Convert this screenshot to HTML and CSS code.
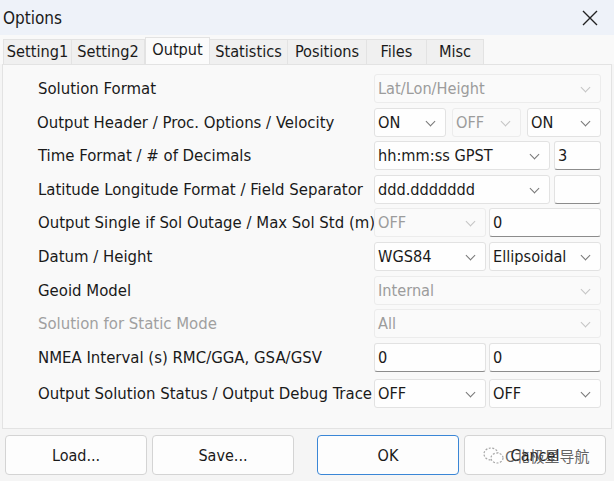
FILE: index.html
```html
<!DOCTYPE html>
<html lang="en">
<head>
    <meta charset="UTF-8">
    <title>Options</title>
    <link rel="stylesheet" href="styles.css">
</head>
<body>
    <div class="titlebar">
        <span class="title">Options</span>
        <svg class="close" width="18" height="18" viewBox="0 0 18 18">
            <path d="M2 2 L16 16 M16 2 L2 16" stroke="#222" stroke-width="1.4" fill="none"/>
        </svg>
    </div>

    <div class="tabs">
        <div class="tab" style="width:69px">Setting1</div>
        <div class="tab" style="width:73px">Setting2</div>
        <div class="tab active" style="width:65px">Output</div>
        <div class="tab" style="width:78px">Statistics</div>
        <div class="tab" style="width:79px">Positions</div>
        <div class="tab" style="width:60px">Files</div>
        <div class="tab" style="width:57px">Misc</div>
    </div>

    <div class="panel">
        <div class="row">
            <label>Solution Format</label>
            <div class="controls">
                <div class="combo disabled w-full">Lat/Lon/Height</div>
            </div>
        </div>
        <div class="row">
            <label class="nudge">Output Header / Proc. Options / Velocity</label>
            <div class="controls">
                <div class="combo" style="width:72px">ON</div>
                <div class="combo disabled" style="width:69px;margin-left:6px">OFF</div>
                <div class="combo" style="width:74px;margin-left:6px">ON</div>
            </div>
        </div>
        <div class="row">
            <label>Time Format / # of Decimals</label>
            <div class="controls">
                <div class="combo" style="width:176px">hh:mm:ss GPST</div>
                <div class="edit" style="width:47px">3</div>
            </div>
        </div>
        <div class="row">
            <label>Latitude Longitude Format / Field Separator</label>
            <div class="controls">
                <div class="combo" style="width:176px">ddd.ddddddd</div>
                <div class="edit" style="width:47px"></div>
            </div>
        </div>
        <div class="row">
            <label>Output Single if Sol Outage / Max Sol Std (m)</label>
            <div class="controls">
                <div class="combo disabled w-half">OFF</div>
                <div class="edit w-half">0</div>
            </div>
        </div>
        <div class="row">
            <label>Datum / Height</label>
            <div class="controls">
                <div class="combo w-half">WGS84</div>
                <div class="combo w-half">Ellipsoidal</div>
            </div>
        </div>
        <div class="row">
            <label>Geoid Model</label>
            <div class="controls">
                <div class="combo disabled w-full">Internal</div>
            </div>
        </div>
        <div class="row">
            <label class="grey">Solution for Static Mode</label>
            <div class="controls">
                <div class="combo disabled w-full">All</div>
            </div>
        </div>
        <div class="row">
            <label>NMEA Interval (s) RMC/GGA, GSA/GSV</label>
            <div class="controls">
                <div class="edit w-half">0</div>
                <div class="edit w-half">0</div>
            </div>
        </div>
        <div class="row last">
            <label>Output Solution Status / Output Debug Trace</label>
            <div class="controls">
                <div class="combo w-half">OFF</div>
                <div class="combo w-half">OFF</div>
            </div>
        </div>
    </div>

    <div class="buttons">
        <div class="btn">Load...</div>
        <div class="btn">Save...</div>
        <div class="btn ok">OK</div>
        <div class="btn cancel">Cancel
            <span class="watermark">
                <svg width="22" height="20" viewBox="0 0 22 20">
                    <ellipse cx="8" cy="8" rx="7" ry="6" fill="none" stroke="#999" stroke-width="1.2" stroke-dasharray="2 1.5"/>
                    <ellipse cx="14" cy="12" rx="6" ry="5" fill="#fff" stroke="#999" stroke-width="1.2" stroke-dasharray="2 1.5"/>
                </svg>C北极星导航
            </span>
        </div>
    </div>
</body>
</html>
```

FILE: styles.css
```css
body {
    margin: 0;
    width: 614px;
    height: 481px;
    background-color: #f5f5f5;
    font-family: "DejaVu Sans Condensed", "DejaVu Sans", sans-serif;
    font-size: 16.2px;
    color: #1a1a1a;
    overflow: hidden;
}
.titlebar {
    height: 35px;
    background-color: #eef2f9;
    display: flex;
    align-items: center;
    justify-content: space-between;
    padding: 0 15px 0 3px;
}
.title {
    font-size: 17px;
}
.tabs {
    display: flex;
    height: 27px;
    padding: 2px 0 0 3px;
    background-color: #f9f9f9;
}
.tab {
    box-sizing: border-box;
    height: 25px;
    margin-top: 2px;
    background-color: #f0f0f0;
    border: 1px solid #e3e3e3;
    border-bottom: none;
    border-left: none;
    text-align: center;
    line-height: 23px;
    white-space: nowrap;
}
.tab:first-child {
    border-left: 1px solid #e3e3e3;
}
.tab.active {
    background-color: #fbfbfb;
    height: 27px;
    margin-top: 0;
    border-left: 1px solid #e3e3e3;
    line-height: 23px;
    position: relative;
    z-index: 1;
}
.panel {
    margin: 0 2px;
    height: 365px;
    box-sizing: border-box;
    background-color: #f9f9f9;
    border: 1px solid #e3e3e3;
    padding: 9px 0 0 35px;
}
.row {
    display: flex;
    align-items: center;
    height: 29px;
    margin-bottom: 4.6px;
}
.row.last {
    margin-top: 7px;
}
label {
    width: 336px;
    font-size: 16.6px;
    white-space: nowrap;
}
label.nudge {
    margin-left: -1px;
    margin-right: 1px;
}
.grey {
    color: #a0a0a0;
}
.controls {
    display: flex;
    justify-content: space-between;
    width: 227px;
    height: 29px;
}
.combo, .edit {
    box-sizing: border-box;
    height: 29px;
    line-height: 27px;
    padding-left: 3px;
    background-color: #fefefe;
    border: 1px solid #e2e2e2;
    border-radius: 3px;
    white-space: nowrap;
    overflow: hidden;
    position: relative;
}
.combo::after {
    content: "";
    position: absolute;
    right: 11px;
    top: 9px;
    width: 6px;
    height: 6px;
    border-right: 1.2px solid #777;
    border-bottom: 1.2px solid #777;
    transform: rotate(45deg);
}
.combo.disabled {
    background-color: #fafafa;
    border-color: #ececec;
    color: #9c9c9c;
}
.combo.disabled::after {
    border-color: #c4c4c4;
}
.edit {
    border-bottom: 1px solid #8c8c8c;
}
.w-full {
    width: 227px;
}
.w-half {
    width: 112px;
}
.buttons {
    display: flex;
    padding: 6px 0 0 5px;
}
.btn {
    box-sizing: border-box;
    width: 142px;
    height: 40px;
    margin-right: 5px;
    background-color: #fdfdfd;
    border: 1px solid #d4d4d4;
    border-radius: 4px;
    display: flex;
    align-items: center;
    justify-content: center;
    font-size: 16px;
    position: relative;
}
.btn.ok {
    margin-left: 18px;
    border-color: #3a86d6;
}
.watermark {
    position: absolute;
    left: 18px;
    top: 9px;
    display: flex;
    align-items: center;
    color: #4a4a4a;
    font-family: "Noto Sans CJK SC", sans-serif;
    font-size: 15px;
    opacity: 0.85;
}
```
